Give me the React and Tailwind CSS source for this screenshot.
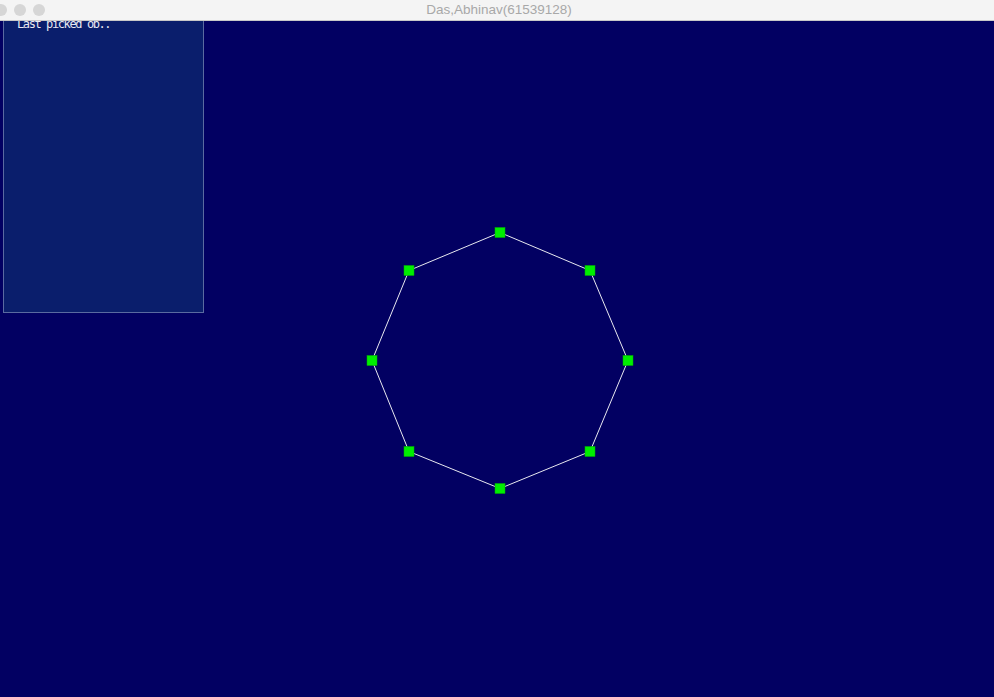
import React from "react";

const pts = [
  [500, 232], [590, 270], [628, 360], [590, 451],
  [500, 488], [409, 451], [372, 360], [409, 270],
];

export default function App() {
  return (
    <div className="w-[994px] h-[697px] bg-[#020062] flex flex-col overflow-hidden relative" style={{ fontFamily: "'Liberation Sans', Arial, sans-serif" }}>
      <div className="h-[21px] shrink-0 bg-[#f4f4f4] border-b border-[#c8c8c8] flex items-center relative z-10">
        <div className="flex items-center gap-[7px] -ml-[5px]">
          <div className="w-[12px] h-[12px] rounded-full bg-[#d6d6d6]" />
          <div className="w-[12px] h-[12px] rounded-full bg-[#d6d6d6]" />
          <div className="w-[12px] h-[12px] rounded-full bg-[#d6d6d6]" />
        </div>
        <div className="absolute left-0 right-0 top-0 h-[20px] flex items-center justify-center text-[13.5px] text-[#a8a8a8] pl-[4px]">
          Das,Abhinav(61539128)
        </div>
      </div>
      <div className="flex-1 flex flex-col items-start">
        <div className="ml-[3px] w-[201px] h-[292px] bg-[#0a1e6c] border border-[#5a6aa0] border-t-0 pl-[13px] flex flex-col">
          <div className="text-[12px] leading-[12px] tracking-[-1.4px] text-[#e8e8f0] -mt-[3.5px]" style={{ fontFamily: "'DejaVu Sans Mono', monospace" }}>
            Last picked ob..
          </div>
        </div>
      </div>
      <svg className="absolute left-0 top-0" width="994" height="697">
        <polygon points={pts.map(([x, y]) => `${x},${y + 0.5}`).join(" ")} fill="none" stroke="#e8e8f0" strokeWidth="1" />
        {pts.map(([x, y], i) => (
          <rect key={i} x={x - 5} y={y - 4.5} width="10" height="10" fill="#00ee00" stroke="#00b000" strokeWidth="0.5" />
        ))}
        <path d="M713 -3 L713 9 L716 6 L718.5 11 L720.5 10 L718 5 L722 5 Z" fill="#111" stroke="#fff" strokeWidth="1" />
      </svg>
    </div>
  );
}
